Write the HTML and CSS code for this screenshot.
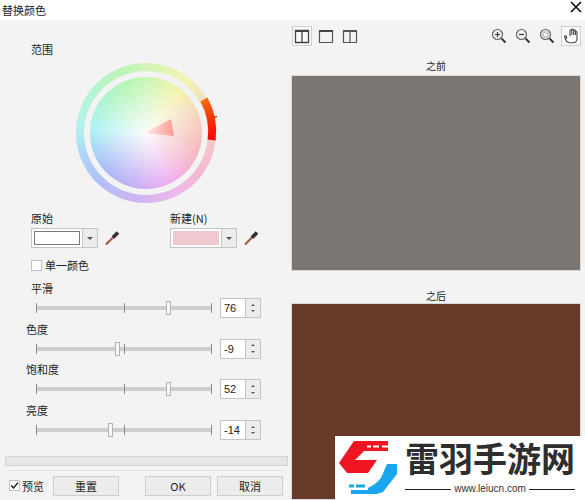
FILE: index.html
```html
<!DOCTYPE html>
<html>
<head>
    <meta charset="utf-8">
    <meta name="viewport" content="width=device-width, initial-scale=1.0">
    <link rel="stylesheet" href="styles.css">
</head>
<body>
<div class="titlebar">
    <span>替换颜色</span>
    <svg class="close" width="12" height="12" viewBox="0 0 12 12"><path d="M1 1l10 10M11 1L1 11" stroke="#111" stroke-width="1.7"/></svg>
</div>
<div class="dialog">
    <div class="left">
        <div class="label">范围</div>
        <div class="wheel">
            <div class="wheel-gap"><div class="wheel-disc"></div></div>
            <svg class="wheel-marks" width="150" height="140" viewBox="0 0 150 140">
                <defs>
                    <linearGradient id="arc" x1="0" y1="0" x2="0" y2="1">
                        <stop offset="0" stop-color="#f76a10"/>
                        <stop offset="0.55" stop-color="#f92a05"/>
                        <stop offset="1" stop-color="#fb0505"/>
                    </linearGradient>
                    <linearGradient id="wedge" x1="0" y1="0" x2="1" y2="0">
                        <stop offset="0" stop-color="#fdeeea"/>
                        <stop offset="1" stop-color="#fb9a92"/>
                    </linearGradient>
                </defs>
                <path d="M128 36.500A66 66 0 0 1 135.600 77" fill="none" stroke="url(#arc)" stroke-width="8"/>
                <path d="M136 54.500l5-1" stroke="#d5340f" stroke-width="1.500"/>
                <path d="M69 70L95 56L98 73Z" fill="url(#wedge)"/>
            </svg>
        </div>
        <div class="colors">
            <div class="color-group">
                <div class="label">原始</div>
                <div class="combo-row">
                    <div class="combo">
                        <div class="swatch"><div class="swatch-fill white"></div></div>
                        <div class="combo-arrow"></div>
                    </div>
                    <svg class="dropper" width="16" height="16" viewBox="0 0 16 16"><path d="M2 14.500L9.500 7" stroke="#a8573c" stroke-width="2.200"/><path d="M9 7.500L14 2.500" stroke="#333" stroke-width="3.800"/></svg>
                </div>
            </div>
            <div class="color-group">
                <div class="label">新建(N)</div>
                <div class="combo-row">
                    <div class="combo">
                        <div class="swatch plain"><div class="swatch-fill pink"></div></div>
                        <div class="combo-arrow"></div>
                    </div>
                    <svg class="dropper" width="16" height="16" viewBox="0 0 16 16"><path d="M2 14.500L9.500 7" stroke="#a8573c" stroke-width="2.200"/><path d="M9 7.500L14 2.500" stroke="#333" stroke-width="3.800"/></svg>
                </div>
            </div>
        </div>
        <div class="check-row">
            <span class="check"></span>
            <span>单一颜色</span>
        </div>
        <div class="slider-block">
            <div class="label">平滑</div>
            <div class="slider-row">
                <div class="slider"><i class="tick"></i><i class="tick"></i><i class="tick"></i><b class="thumb" style="left:133px"></b></div>
                <div class="spin"><span class="spin-value">76</span><span class="spin-arrows"><i class="up"></i><i class="down"></i></span></div>
            </div>
        </div>
        <div class="slider-block">
            <div class="label out">色度</div>
            <div class="slider-row">
                <div class="slider"><i class="tick"></i><i class="tick"></i><i class="tick"></i><b class="thumb" style="left:82px"></b></div>
                <div class="spin"><span class="spin-value">-9</span><span class="spin-arrows"><i class="up"></i><i class="down"></i></span></div>
            </div>
        </div>
        <div class="slider-block">
            <div class="label out">饱和度</div>
            <div class="slider-row">
                <div class="slider"><i class="tick"></i><i class="tick"></i><i class="tick"></i><b class="thumb" style="left:133px"></b></div>
                <div class="spin"><span class="spin-value">52</span><span class="spin-arrows"><i class="up"></i><i class="down"></i></span></div>
            </div>
        </div>
        <div class="slider-block">
            <div class="label out">亮度</div>
            <div class="slider-row">
                <div class="slider"><i class="tick"></i><i class="tick"></i><i class="tick"></i><b class="thumb" style="left:75px"></b></div>
                <div class="spin"><span class="spin-value">-14</span><span class="spin-arrows"><i class="up"></i><i class="down"></i></span></div>
            </div>
        </div>
        <div class="progress"></div>
        <div class="separator"></div>
        <div class="actions">
            <div class="preview-check">
                <svg class="check on" width="11" height="11" viewBox="0 0 11 11"><path d="M1.500 5.500l2.800 3L9.800 2" fill="none" stroke="#111" stroke-width="1.700"/></svg>
                <span>预览</span>
            </div>
            <button class="btn reset">重置</button>
            <button class="btn ok">OK</button>
            <button class="btn">取消</button>
        </div>
    </div>
    <div class="right">
        <div class="toolbar">
            <div class="tool-group">
                <div class="tool selected"><svg width="16" height="15" viewBox="0 0 16 15"><path d="M1.500 1.500h13v12h-13zM8 1.500v12" fill="none" stroke="#444" stroke-width="1.300"/><path d="M1 1h14v2H1z" fill="#444"/></svg></div>
                <div class="tool"><svg width="16" height="15" viewBox="0 0 16 15"><path d="M1.500 1.500h13v12h-13z" fill="none" stroke="#555" stroke-width="1.200"/><path d="M1 1h14v2H1z" fill="#444"/></svg></div>
                <div class="tool"><svg width="16" height="15" viewBox="0 0 16 15"><path d="M1.500 1.500h13v12h-13zM8 1.500v12" fill="none" stroke="#555" stroke-width="1.200"/><path d="M1 1h14v2H1z" fill="#555"/></svg></div>
            </div>
            <div class="tool-group">
                <div class="tool"><svg width="16" height="16" viewBox="0 0 16 16"><circle cx="6.500" cy="6.500" r="5" fill="none" stroke="#666" stroke-width="1.200"/><path d="M4 6.500h5M6.500 4v5" stroke="#333" stroke-width="1.200"/><path d="M10.500 10.500l4 4" stroke="#333" stroke-width="2"/></svg></div>
                <div class="tool"><svg width="16" height="16" viewBox="0 0 16 16"><circle cx="6.500" cy="6.500" r="5" fill="none" stroke="#666" stroke-width="1.200"/><path d="M4 6.500h5" stroke="#333" stroke-width="1.200"/><path d="M10.500 10.500l4 4" stroke="#333" stroke-width="2"/></svg></div>
                <div class="tool"><svg width="16" height="16" viewBox="0 0 16 16"><circle cx="6.500" cy="6.500" r="5" fill="none" stroke="#666" stroke-width="1.200"/><circle cx="6.500" cy="6.500" r="2.600" fill="none" stroke="#777" stroke-width="1.200" stroke-dasharray="1 1"/><path d="M10.500 10.500l4 4" stroke="#333" stroke-width="2"/></svg></div>
                <div class="tool selected"><svg width="16" height="16" viewBox="0 0 16 16"><path d="M3.500 11V8.500C2.500 7.500 1.500 7.700 1.500 8.700c.5 2 1.800 6 5.500 6h3c2.600 0 4-2 4-4.500V4.500c0-1.200-1.600-1.200-1.600 0V7m0-3V3c0-1.200-1.800-1.200-1.800 0v4m0-4.500V2C10.600.8 8.800.8 8.800 2v5m0-4.300c0-1.200-1.800-1.200-1.800 0V8" fill="#fff" stroke="#444" stroke-width="1.100"/></svg></div>
            </div>
        </div>
        <div class="pane-title first">之前</div>
        <div class="pane before"></div>
        <div class="pane-title second">之后</div>
        <div class="pane after"></div>
    </div>
</div>
<div class="watermark">
    <svg class="logo" width="70" height="64" viewBox="0 0 70 64">
        <path d="M19 5H53V15H29L20 24H42L33 37H12L4 27Z" fill="#f01522"/>
        <path d="M32 10.500h4M38 10.500h6M47 10.500h6" stroke="#fff" stroke-width="2"/>
        <path d="M52 28H62V38L48 56L42 58H33V52L40 48L46 42Z" fill="#1aa6ee"/>
        <path d="M14 50h5M21 50h9" stroke="#1aa6ee" stroke-width="3"/>
        <path d="M16 56h20" stroke="#1aa6ee" stroke-width="4"/>
    </svg>
    <div class="brand">
        <div class="brand-name">雷羽手游网</div>
        <div class="brand-url"><i></i><span>www.leiucn.com</span><i></i></div>
    </div>
</div>
</body>
</html>
```

FILE: styles.css
```css
* {
    box-sizing: border-box;
}

body {
    margin: 0;
    width: 585px;
    height: 500px;
    overflow: hidden;
    position: relative;
    background: #f3f3f3;
    color: #222;
    font-family: "Noto Sans CJK SC", "Liberation Sans", sans-serif;
    font-size: 11px;
    line-height: 16px;
}

.titlebar {
    height: 20px;
    background: #fff;
    display: flex;
    align-items: center;
    justify-content: space-between;
    padding: 0 2px 0 2px;
    font-size: 11px;
}

.close {
    margin-right: 1px;
    margin-top: -6px;
}

.dialog {
    display: flex;
    height: 480px;
}

.left {
    width: 291px;
    padding: 21px 0 0 31px;
}

.label {
    height: 16px;
}

.label.out {
    margin-left: -5px;
}

/* colour wheel */
.wheel {
    width: 140px;
    height: 140px;
    margin: 6px 0 0 45px;
    border-radius: 50%;
    position: relative;
    display: flex;
    align-items: center;
    justify-content: center;
    background: conic-gradient(#d3f5b8 0deg, #f4f2b5 40deg, #f2dcc4 65deg, #f6c6c6 100deg, #f3b6d4 130deg, #eeb8ea 155deg, #ccb4f4 190deg, #b2bff6 225deg, #acdaf4 255deg, #b2f2ee 275deg, #b4f5cc 310deg, #bdf4b6 340deg, #d3f5b8 360deg);
}

.wheel-gap {
    width: 124px;
    height: 124px;
    border-radius: 50%;
    background: #f3f3f3;
    display: flex;
    align-items: center;
    justify-content: center;
}

.wheel-disc {
    width: 112px;
    height: 112px;
    border-radius: 50%;
    background:
        radial-gradient(circle, #fbfbfb 0, rgba(250, 250, 250, 0.55) 35%, rgba(250, 250, 250, 0) 75%),
        conic-gradient(#c5f5ae 0deg, #f5f2a6 40deg, #f6d7b8 65deg, #f6b7b5 100deg, #f5abd0 130deg, #eeaaf0 155deg, #c3a7f6 190deg, #a5b3f8 225deg, #a1d6f6 255deg, #a3f3f1 275deg, #a5f4c6 310deg, #aff5ac 340deg, #c5f5ae 360deg);
}

.wheel-marks {
    position: absolute;
    left: 0;
    top: 0;
}

/* colour pickers */
.colors {
    display: flex;
    margin-top: 7px;
}

.color-group {
    flex: none;
    width: 139px;
}

.combo-row {
    display: flex;
    align-items: center;
    margin-top: 2px;
}

.combo {
    width: 67px;
    height: 20px;
    display: flex;
    border: 1px solid #c4c4c4;
    background: #fff;
}

.swatch {
    flex: 1;
    padding: 2px;
}

.swatch-fill {
    height: 100%;
}

.swatch-fill.white {
    background: #fff;
    border: 1px solid #7b7b7b;
}

.swatch-fill.pink {
    background: #f0c8d0;
}

.combo-arrow {
    width: 15px;
    background: #ececec;
    border-left: 1px solid #c4c4c4;
    display: flex;
    align-items: center;
    justify-content: center;
}

.combo-arrow::after {
    content: "";
    border: 3px solid transparent;
    border-top: 3px solid #555;
    border-bottom: 0;
}

.dropper {
    margin-left: 6px;
    margin-top: -1px;
}

/* checkboxes */
.check-row {
    display: flex;
    align-items: center;
    gap: 3px;
    margin-top: 9px;
    height: 16px;
}

.check {
    width: 11px;
    height: 11px;
    background: #fff;
    border: 1px solid #c0c0c0;
    display: block;
}

/* sliders */
.slider-block {
    height: 40.700px;
}

.check-row + .slider-block {
    margin-top: 7px;
}

.slider-row {
    display: flex;
    align-items: center;
    margin-top: 2px;
}

.slider {
    width: 176px;
    height: 20px;
    margin-left: 5px;
    position: relative;
    display: flex;
    align-items: center;
    justify-content: space-between;
    background: linear-gradient(#cbd0cb, #cbd0cb) center / 100% 4px no-repeat;
}

.tick {
    width: 1px;
    height: 10px;
    background: #8d8d8d;
}

.thumb {
    position: absolute;
    top: 3px;
    width: 5px;
    height: 14px;
    background: #f6f6f6;
    border: 1px solid #b4b4b4;
    margin-left: -3px;
}

.spin {
    width: 41px;
    height: 20px;
    margin-left: 8px;
    display: flex;
    background: #fff;
    border: 1px solid #c4c4c4;
}

.spin-value {
    flex: 1;
    padding-left: 3px;
    font-family: "Liberation Sans", sans-serif;
    font-size: 11px;
    line-height: 18px;
}

.spin-arrows {
    width: 15px;
    background: #ececec;
    border-left: 1px solid #c4c4c4;
    display: flex;
    flex-direction: column;
    align-items: center;
    justify-content: space-evenly;
}

.spin-arrows i {
    border: 2px solid transparent;
}

.spin-arrows .up {
    border-bottom: 2px solid #555;
    border-top: 0;
}

.spin-arrows .down {
    border-top: 2px solid #555;
    border-bottom: 0;
}

/* bottom of the dialog */
.progress {
    width: 283px;
    height: 10px;
    margin: 13px 0 0 -26px;
    background: #e6e6e6;
    border: 1px solid #d2d2d2;
}

.separator {
    width: 274px;
    height: 1px;
    margin: 4px 0 0 -22px;
    background: #e2e2e2;
}

.actions {
    display: flex;
    align-items: center;
    margin: 5px 0 0 -22px;
    height: 20px;
}

.preview-check {
    width: 44px;
    display: flex;
    align-items: center;
    gap: 2px;
    font-size: 11px;
}

.btn {
    width: 66px;
    height: 20px;
    margin: 0;
    padding: 0;
    border: 1px solid #cdcdcd;
    background: #ececec;
    color: #222;
    font-family: inherit;
    font-size: 11px;
    line-height: 16px;
}

.btn.reset {
    margin-right: 26px;
}

.btn.ok {
    margin-right: 6px;
}

/* right side */
.right {
    width: 290px;
    padding-top: 6px;
}

.toolbar {
    height: 20px;
    display: flex;
    justify-content: space-between;
    padding-left: 1px;
}

.tool-group {
    display: flex;
    gap: 4px;
}

.tool {
    width: 20px;
    height: 20px;
    display: flex;
    align-items: center;
    justify-content: center;
    border: 1px solid transparent;
}

.tool.selected {
    border-color: #cfcfcf;
    background: #f9f9f9;
}

.pane-title {
    height: 16px;
    text-align: center;
    font-size: 10px;
}

.pane-title.first {
    margin-top: 12px;
    margin-bottom: 1px;
}

.pane-title.second {
    margin-top: 17px;
    margin-bottom: -1px;
}

.pane {
    border: 1px solid #d9d9d9;
}

.pane.before {
    height: 196px;
    background: #7c7672;
}

.pane.after {
    height: 197px;
    background: #673a29;
}

/* site watermark over the corner */
.watermark {
    position: absolute;
    left: 335px;
    top: 436px;
    width: 250px;
    height: 64px;
    background: #fff;
    display: flex;
}

.brand {
    width: 170px;
    height: 64px;
}

.brand-name {
    font-family: "Noto Sans CJK SC", serif;
    font-size: 34px;
    font-weight: 700;
    line-height: 44px;
    color: #2e2e2e;
    white-space: nowrap;
}

.brand-url {
    display: flex;
    align-items: center;
    gap: 3px;
    font-family: "Liberation Sans", sans-serif;
    font-size: 10px;
    line-height: 14px;
    color: #333;
    margin-top: 2px;
}

.brand-url i {
    flex: 1;
    height: 1px;
    background: #222;
}
```
